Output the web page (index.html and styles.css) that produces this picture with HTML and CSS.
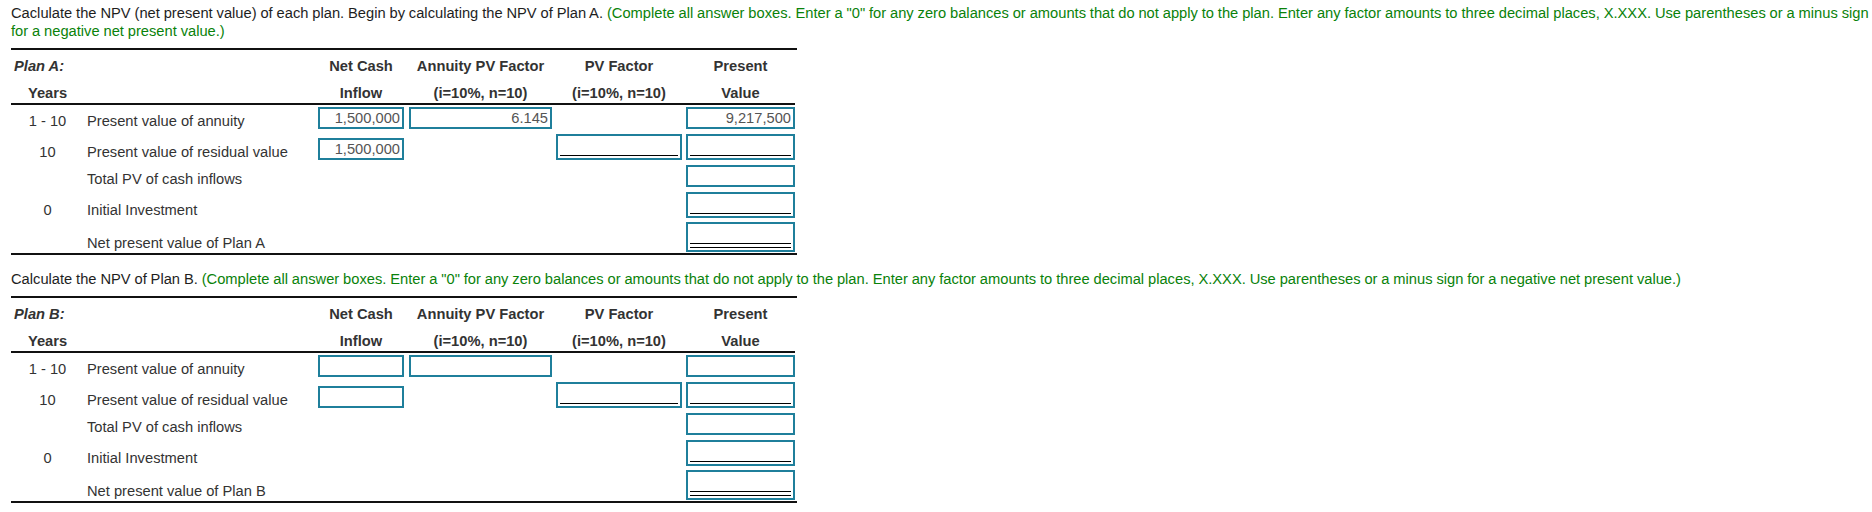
FILE: index.html
```html
<!DOCTYPE html>
<html>
<head>
<meta charset="utf-8">
<link rel="stylesheet" href="styles.css">
</head>
<body>
<div class="page">
  <p class="q">Caclulate the NPV (net present value) of each plan. Begin by calculating the NPV of Plan A. <span class="hint">(Complete all answer boxes. Enter a "0" for any zero balances or amounts that do not apply to the plan. Enter any factor amounts to three decimal places, X.XXX. Use parentheses or a minus sign for a negative net present value.)</span></p>

  <div class="plan">
    <div class="grid head">
      <div class="pname">Plan A:</div><div></div>
      <div class="hc k1">Net Cash</div><div class="hc k2">Annuity PV Factor</div><div class="hc k3">PV Factor</div><div class="hc k4">Present</div>
      <div class="yr hy">Years</div><div></div>
      <div class="hc k1">Inflow</div><div class="hc k2">(i=10%, n=10)</div><div class="hc k3">(i=10%, n=10)</div><div class="hc k4">Value</div>
    </div>
    <div class="grid body">
      <div class="yr">1 - 10</div><div class="lbl">Present value of annuity</div>
      <div class="k1"><div class="box">1,500,000</div></div>
      <div class="k2"><div class="box">6.145</div></div>
      <div class="k3"></div>
      <div class="k4"><div class="box">9,217,500</div></div>

      <div class="yr">10</div><div class="lbl">Present value of residual value</div>
      <div class="k1"><div class="box">1,500,000</div></div>
      <div class="k2"></div>
      <div class="k3"><div class="box u"><div class="ln"></div></div></div>
      <div class="k4"><div class="box u"><div class="ln"></div></div></div>

      <div class="yr"></div><div class="lbl">Total PV of cash inflows</div>
      <div class="k1"></div><div class="k2"></div><div class="k3"></div>
      <div class="k4"><div class="box"></div></div>

      <div class="yr">0</div><div class="lbl">Initial Investment</div>
      <div class="k1"></div><div class="k2"></div><div class="k3"></div>
      <div class="k4"><div class="box u"><div class="ln"></div></div></div>

      <div class="yr"></div><div class="lbl">Net present value of Plan A</div>
      <div class="k1"></div><div class="k2"></div><div class="k3"></div>
      <div class="k4"><div class="box d"><div class="ln dbl"></div></div></div>
    </div>
  </div>

  <p class="q q2">Calculate the NPV of Plan B. <span class="hint">(Complete all answer boxes. Enter a "0" for any zero balances or amounts that do not apply to the plan. Enter any factor amounts to three decimal places, X.XXX. Use parentheses or a minus sign for a negative net present value.)</span></p>

  <div class="plan">
    <div class="grid head">
      <div class="pname">Plan B:</div><div></div>
      <div class="hc k1">Net Cash</div><div class="hc k2">Annuity PV Factor</div><div class="hc k3">PV Factor</div><div class="hc k4">Present</div>
      <div class="yr hy">Years</div><div></div>
      <div class="hc k1">Inflow</div><div class="hc k2">(i=10%, n=10)</div><div class="hc k3">(i=10%, n=10)</div><div class="hc k4">Value</div>
    </div>
    <div class="grid body">
      <div class="yr">1 - 10</div><div class="lbl">Present value of annuity</div>
      <div class="k1"><div class="box"></div></div>
      <div class="k2"><div class="box"></div></div>
      <div class="k3"></div>
      <div class="k4"><div class="box"></div></div>

      <div class="yr">10</div><div class="lbl">Present value of residual value</div>
      <div class="k1"><div class="box"></div></div>
      <div class="k2"></div>
      <div class="k3"><div class="box u"><div class="ln"></div></div></div>
      <div class="k4"><div class="box u"><div class="ln"></div></div></div>

      <div class="yr"></div><div class="lbl">Total PV of cash inflows</div>
      <div class="k1"></div><div class="k2"></div><div class="k3"></div>
      <div class="k4"><div class="box"></div></div>

      <div class="yr">0</div><div class="lbl">Initial Investment</div>
      <div class="k1"></div><div class="k2"></div><div class="k3"></div>
      <div class="k4"><div class="box u"><div class="ln"></div></div></div>

      <div class="yr"></div><div class="lbl">Net present value of Plan B</div>
      <div class="k1"></div><div class="k2"></div><div class="k3"></div>
      <div class="k4"><div class="box d"><div class="ln dbl"></div></div></div>
    </div>
  </div>
</div>
</body>
</html>
```

FILE: styles.css
```css
html, body {
  margin: 0;
  padding: 0;
  background: #fff;
}
body {
  font-family: "Liberation Sans", Arial, sans-serif;
  font-size: 14.7px;
  line-height: 18px;
  color: #333;
}
.page {
  padding: 4px 0 0 11px;
}
.q {
  margin: 0 0 8px 0;
  color: #1e1e1e;
  word-spacing: -0.2px;
}
.q2 {
  margin-top: 15px;
}
.hint {
  color: #0a820a;
}
.plan {
  width: 786px;
  box-sizing: border-box;
  padding-right: 2px;
  border-top: 2px solid #111;
  border-bottom: 2px solid #111;
}
.grid {
  display: grid;
  grid-template-columns: 73px 234px 87px 147px 130px 113px;
  align-items: end;
}
.head {
  grid-template-rows: 26px 27px;
  border-bottom: 2px solid #111;
}
.body {
  grid-template-rows: 26px 31px 27px 31px 33px;
}
.pname {
  font-weight: bold;
  font-style: italic;
  padding: 0 0 1px 3px;
  white-space: nowrap;
}
.hc {
  font-weight: bold;
  text-align: center;
  padding-bottom: 1px;
  white-space: nowrap;
}
.yr {
  text-align: center;
  padding-bottom: 1px;
}
.hy {
  font-weight: bold;
}
.lbl {
  padding: 0 0 1px 3px;
  white-space: nowrap;
}
.k1 {
  padding-right: 1px;
}
.k2, .k3, .k4 {
  padding-left: 4px;
}
.box {
  box-sizing: border-box;
  height: 22px;
  margin-bottom: 2px;
  border: 2px solid #1f7f9b;
  padding: 0 2px;
  text-align: right;
  line-height: 18px;
  color: #555;
  background: #fff;
}
.box.u {
  height: 26px;
  display: flex;
  flex-direction: column;
  justify-content: flex-end;
  padding: 0 2px 2px;
}
.box.d {
  height: 30px;
  margin-bottom: 1px;
  display: flex;
  flex-direction: column;
  justify-content: flex-end;
  padding: 0 2px 6px;
}
.ln {
  height: 1px;
  background: #000;
}
.ln.dbl {
  box-shadow: 0 4px 0 #000;
}
```
